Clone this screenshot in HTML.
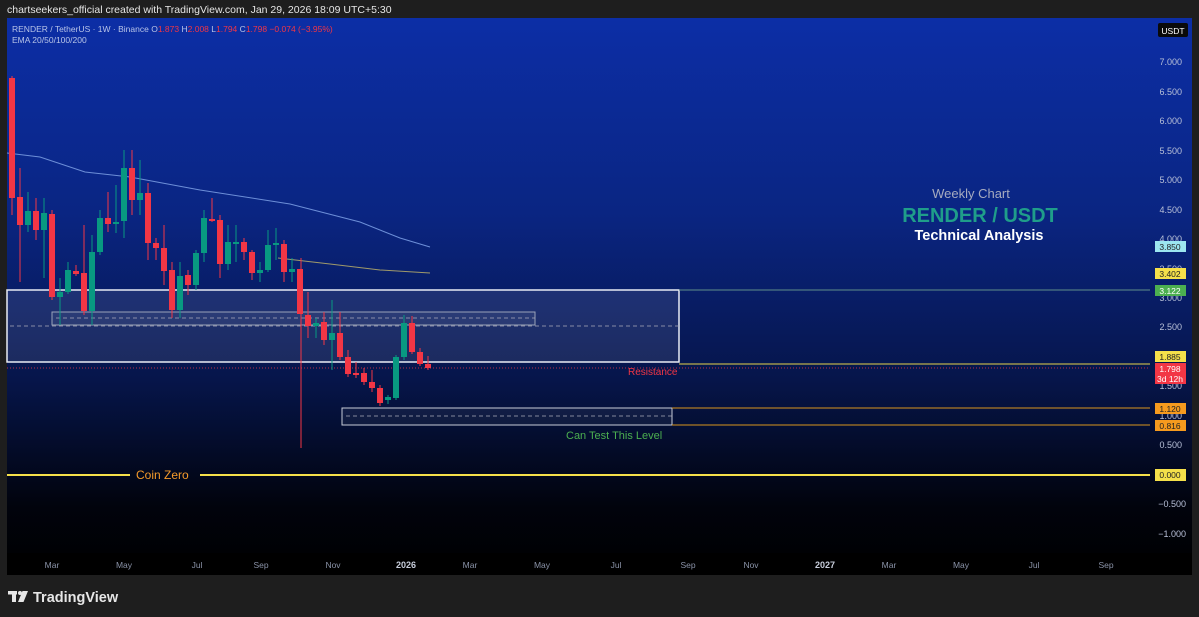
<!DOCTYPE html>
<html><head><meta charset="utf-8"><style>
html,body{margin:0;padding:0;background:#1e1e1e;width:1199px;height:617px;overflow:hidden;font-family:"Liberation Sans",sans-serif}
svg{position:absolute;left:0;top:0}
</style></head><body>
<svg width="1199" height="617" viewBox="0 0 1199 617" font-family="Liberation Sans, sans-serif">
<defs>
<linearGradient id="bg" x1="0" y1="0" x2="0" y2="1">
<stop offset="0" stop-color="#0c2ea6"/>
<stop offset="0.35" stop-color="#0a2582"/>
<stop offset="0.65" stop-color="#06154a"/>
<stop offset="0.88" stop-color="#01030c"/>
<stop offset="1" stop-color="#000"/>
</linearGradient>
</defs>
<rect x="0" y="0" width="1199" height="617" fill="#1e1e1e"/>
<text x="7" y="13" font-size="10.5" fill="#e6e6e6">chartseekers_official created with TradingView.com, Jan 29, 2026 18:09 UTC+5:30</text>
<rect x="7" y="18" width="1185" height="557" fill="url(#bg)"/>
<rect x="7" y="553" width="1185" height="22" fill="#000"/>
<!-- legend -->
<text x="12" y="32" font-size="8.5" fill="#b8c4e8">RENDER / TetherUS · 1W · Binance  <tspan fill="#b8c4e8">O</tspan><tspan fill="#f23645">1.873</tspan>  <tspan fill="#b8c4e8">H</tspan><tspan fill="#f23645">2.008</tspan>  <tspan fill="#b8c4e8">L</tspan><tspan fill="#f23645">1.794</tspan>  <tspan fill="#b8c4e8">C</tspan><tspan fill="#f23645">1.798  −0.074 (−3.95%)</tspan></text>
<text x="12" y="43" font-size="8.5" fill="#b8c4e8">EMA 20/50/100/200</text>
<!-- zones -->
<rect x="7" y="290" width="672" height="72" fill="rgba(255,255,255,0.09)" stroke="#e8ecf4" stroke-width="1.5"/>
<rect x="52" y="312" width="483" height="13" fill="rgba(255,255,255,0.06)" stroke="#9aa3b8" stroke-width="1"/>
<line x1="56" y1="318" x2="535" y2="318" stroke="#aab" stroke-dasharray="4,3" stroke-width="0.8"/>
<line x1="10" y1="326" x2="679" y2="326" stroke="#aab" stroke-dasharray="4,3" stroke-width="0.8"/>
<rect x="342" y="408" width="330" height="17" fill="rgba(255,255,255,0.05)" stroke="#c8ccd8" stroke-width="1"/>
<line x1="346" y1="416" x2="672" y2="416" stroke="#aab" stroke-dasharray="4,3" stroke-width="0.8"/>
<line x1="679" y1="290" x2="1150" y2="290" stroke="#5f8f8a" stroke-width="1"/>
<line x1="679" y1="364" x2="1150" y2="364" stroke="#e8d44a" stroke-width="1"/>
<line x1="672" y1="408" x2="1150" y2="408" stroke="#d9951e" stroke-width="1"/>
<line x1="672" y1="425" x2="1150" y2="425" stroke="#d9951e" stroke-width="1"/>
<line x1="7" y1="368" x2="1150" y2="368" stroke="#f23645" stroke-dasharray="1,2" stroke-width="0.8"/>
<line x1="7" y1="475" x2="130" y2="475" stroke="#f5e04a" stroke-width="2"/>
<line x1="200" y1="475" x2="1150" y2="475" stroke="#f5e04a" stroke-width="2"/>
<text x="136" y="479" font-size="12" fill="#f59a2a">Coin Zero</text>
<text x="628" y="375" font-size="10" fill="#f23645">Resistance</text>
<text x="566" y="439" font-size="11" fill="#4caf50">Can Test This Level</text>
<!-- EMAs -->
<polyline points="7,153 40,157 85,172 130,177 200,190 290,204 360,222 400,238 430,247" fill="none" stroke="#6d8fd8" stroke-width="1"/>
<polyline points="278,258 330,264 380,270 430,273" fill="none" stroke="#a09a6a" stroke-width="1"/>
<!-- wicks -->
<g stroke-width="1">
<g stroke="#f23645">
<line x1="12" y1="76" x2="12" y2="215"/><line x1="20" y1="168" x2="20" y2="282"/><line x1="36" y1="198" x2="36" y2="240"/>
<line x1="52" y1="210" x2="52" y2="300"/><line x1="76" y1="265" x2="76" y2="276"/><line x1="84" y1="225" x2="84" y2="315"/>
<line x1="108" y1="192" x2="108" y2="232"/><line x1="132" y1="150" x2="132" y2="215"/><line x1="148" y1="183" x2="148" y2="260"/>
<line x1="156" y1="238" x2="156" y2="260"/><line x1="164" y1="225" x2="164" y2="285"/><line x1="172" y1="262" x2="172" y2="318"/>
<line x1="188" y1="270" x2="188" y2="295"/><line x1="212" y1="198" x2="212" y2="222"/><line x1="220" y1="215" x2="220" y2="278"/>
<line x1="244" y1="238" x2="244" y2="260"/><line x1="252" y1="250" x2="252" y2="280"/><line x1="284" y1="240" x2="284" y2="282"/>
<line x1="301" y1="258" x2="301" y2="448"/><line x1="308" y1="292" x2="308" y2="338"/><line x1="324" y1="312" x2="324" y2="345"/>
<line x1="340" y1="312" x2="340" y2="360"/><line x1="348" y1="350" x2="348" y2="377"/><line x1="356" y1="362" x2="356" y2="378"/>
<line x1="364" y1="368" x2="364" y2="385"/><line x1="372" y1="370" x2="372" y2="392"/><line x1="380" y1="385" x2="380" y2="406"/>
<line x1="412" y1="316" x2="412" y2="354"/><line x1="420" y1="348" x2="420" y2="366"/><line x1="428" y1="356" x2="428" y2="370"/>
</g>
<g stroke="#089981">
<line x1="28" y1="192" x2="28" y2="232"/><line x1="44" y1="198" x2="44" y2="278"/><line x1="60" y1="278" x2="60" y2="325"/>
<line x1="68" y1="262" x2="68" y2="294"/><line x1="92" y1="235" x2="92" y2="325"/><line x1="100" y1="210" x2="100" y2="255"/>
<line x1="116" y1="185" x2="116" y2="233"/><line x1="124" y1="150" x2="124" y2="238"/><line x1="140" y1="160" x2="140" y2="215"/>
<line x1="180" y1="262" x2="180" y2="318"/><line x1="196" y1="250" x2="196" y2="290"/><line x1="204" y1="210" x2="204" y2="262"/>
<line x1="228" y1="225" x2="228" y2="270"/><line x1="236" y1="225" x2="236" y2="262"/><line x1="260" y1="262" x2="260" y2="282"/>
<line x1="268" y1="230" x2="268" y2="272"/><line x1="276" y1="228" x2="276" y2="260"/><line x1="292" y1="258" x2="292" y2="282"/>
<line x1="316" y1="318" x2="316" y2="338"/><line x1="332" y1="300" x2="332" y2="370"/><line x1="388" y1="395" x2="388" y2="404"/>
<line x1="396" y1="355" x2="396" y2="400"/><line x1="404" y1="315" x2="404" y2="360"/>
</g>
</g>
<!-- bodies -->
<g fill="#f23645">
<rect x="9" y="78" width="6" height="120"/><rect x="17" y="197" width="6" height="28"/><rect x="33" y="211" width="6" height="19"/>
<rect x="49" y="214" width="6" height="83"/><rect x="73" y="271" width="6" height="3"/><rect x="81" y="273" width="6" height="38"/>
<rect x="105" y="218" width="6" height="6"/><rect x="129" y="168" width="6" height="32"/><rect x="145" y="193" width="6" height="50"/>
<rect x="153" y="243" width="6" height="5"/><rect x="161" y="248" width="6" height="23"/><rect x="169" y="270" width="6" height="40"/>
<rect x="185" y="275" width="6" height="10"/><rect x="209" y="219" width="6" height="2"/><rect x="217" y="220" width="6" height="44"/>
<rect x="241" y="242" width="6" height="10"/><rect x="249" y="252" width="6" height="21"/><rect x="281" y="244" width="6" height="28"/>
<rect x="297" y="269" width="6" height="45"/><rect x="305" y="315" width="6" height="11"/><rect x="321" y="322" width="6" height="18"/>
<rect x="337" y="333" width="6" height="24"/><rect x="345" y="357" width="6" height="17"/><rect x="353" y="373" width="6" height="2"/>
<rect x="361" y="373" width="6" height="9"/><rect x="369" y="382" width="6" height="6"/><rect x="377" y="388" width="6" height="15"/>
<rect x="409" y="323" width="6" height="29"/><rect x="417" y="352" width="6" height="12"/><rect x="425" y="364" width="6" height="4"/>
</g>
<g fill="#089981">
<rect x="25" y="211" width="6" height="14"/><rect x="41" y="213" width="6" height="17"/><rect x="57" y="292" width="6" height="5"/>
<rect x="65" y="270" width="6" height="22"/><rect x="89" y="252" width="6" height="59"/><rect x="97" y="218" width="6" height="34"/>
<rect x="113" y="222" width="6" height="2"/><rect x="121" y="168" width="6" height="53"/><rect x="137" y="193" width="6" height="7"/>
<rect x="177" y="276" width="6" height="34"/><rect x="193" y="253" width="6" height="32"/><rect x="201" y="218" width="6" height="35"/>
<rect x="225" y="242" width="6" height="22"/><rect x="233" y="242" width="6" height="2"/><rect x="257" y="270" width="6" height="3"/>
<rect x="265" y="245" width="6" height="25"/><rect x="273" y="243" width="6" height="2"/><rect x="289" y="269" width="6" height="3"/>
<rect x="313" y="323" width="6" height="3"/><rect x="329" y="333" width="6" height="7"/><rect x="385" y="397" width="6" height="3"/>
<rect x="393" y="357" width="6" height="41"/><rect x="401" y="323" width="6" height="34"/>
</g>
<!-- title -->
<text x="971" y="198" font-size="13" fill="#a6abbf" text-anchor="middle">Weekly Chart</text>
<text x="980" y="222" font-size="20" font-weight="bold" fill="#1f9e8a" text-anchor="middle">RENDER / USDT</text>
<text x="979" y="240" font-size="14.5" font-weight="bold" fill="#ffffff" text-anchor="middle">Technical Analysis</text>
<!-- price axis -->
<g font-size="9" fill="#b8c0d8" text-anchor="end">
<text x="1182" y="65">7.000</text><text x="1182" y="95">6.500</text><text x="1182" y="124">6.000</text><text x="1182" y="154">5.500</text>
<text x="1182" y="183">5.000</text><text x="1182" y="213">4.500</text><text x="1182" y="242">4.000</text><text x="1182" y="272">3.500</text>
<text x="1182" y="301">3.000</text><text x="1182" y="330">2.500</text><text x="1182" y="360">2.000</text><text x="1182" y="389">1.500</text>
<text x="1182" y="419">1.000</text><text x="1182" y="448">0.500</text><text x="1186" y="507">−0.500</text><text x="1186" y="537">−1.000</text>
</g>
<rect x="1158" y="23" width="30" height="14" rx="2" fill="#0a0a0a"/>
<text x="1173" y="34" font-size="8.5" fill="#fff" text-anchor="middle">USDT</text>
<g font-size="8.5" text-anchor="middle">
<rect x="1155" y="241" width="31" height="11" fill="#9ce6f0"/><text x="1170" y="250" fill="#222">3.850</text>
<rect x="1155" y="268" width="31" height="11" fill="#f5e04a"/><text x="1170" y="277" fill="#222">3.402</text>
<rect x="1155" y="285" width="31" height="11" fill="#4caf50"/><text x="1170" y="294" fill="#fff">3.122</text>
<rect x="1155" y="351" width="31" height="11" fill="#f5e04a"/><text x="1170" y="360" fill="#222">1.885</text>
<rect x="1155" y="363" width="31" height="21" fill="#f23645"/><text x="1170" y="372" fill="#fff">1.798</text><text x="1170" y="382" fill="#fff">3d 12h</text>
<rect x="1155" y="403" width="31" height="11" fill="#f59a1e"/><text x="1170" y="412" fill="#222">1.120</text>
<rect x="1155" y="420" width="31" height="11" fill="#f59a1e"/><text x="1170" y="429" fill="#222">0.816</text>
<rect x="1155" y="469" width="31" height="12" fill="#f5e04a"/><text x="1170" y="478" fill="#222">0.000</text>
</g>
<!-- time axis -->
<g font-size="8.5" fill="#8a93a8" text-anchor="middle">
<text x="52" y="568">Mar</text><text x="124" y="568">May</text><text x="197" y="568">Jul</text><text x="261" y="568">Sep</text>
<text x="333" y="568">Nov</text><text x="470" y="568">Mar</text><text x="542" y="568">May</text><text x="616" y="568">Jul</text>
<text x="688" y="568">Sep</text><text x="751" y="568">Nov</text><text x="889" y="568">Mar</text><text x="961" y="568">May</text>
<text x="1034" y="568">Jul</text><text x="1106" y="568">Sep</text>
</g>
<text x="406" y="568" font-size="9" font-weight="bold" fill="#c8cedc" text-anchor="middle">2026</text>
<text x="825" y="568" font-size="9" font-weight="bold" fill="#c8cedc" text-anchor="middle">2027</text>
<!-- footer logo -->
<g fill="#e6e6e6">
<rect x="8" y="591" width="9" height="3.5"/><rect x="12" y="591" width="4" height="11"/>
<circle cx="20" cy="593" r="2"/><polygon points="22.5,591 28,591 23.5,602 18,602"/>
</g>
<text x="33" y="602" font-size="14.5" font-weight="bold" fill="#e6e6e6">TradingView</text>
</svg>
</body></html>
